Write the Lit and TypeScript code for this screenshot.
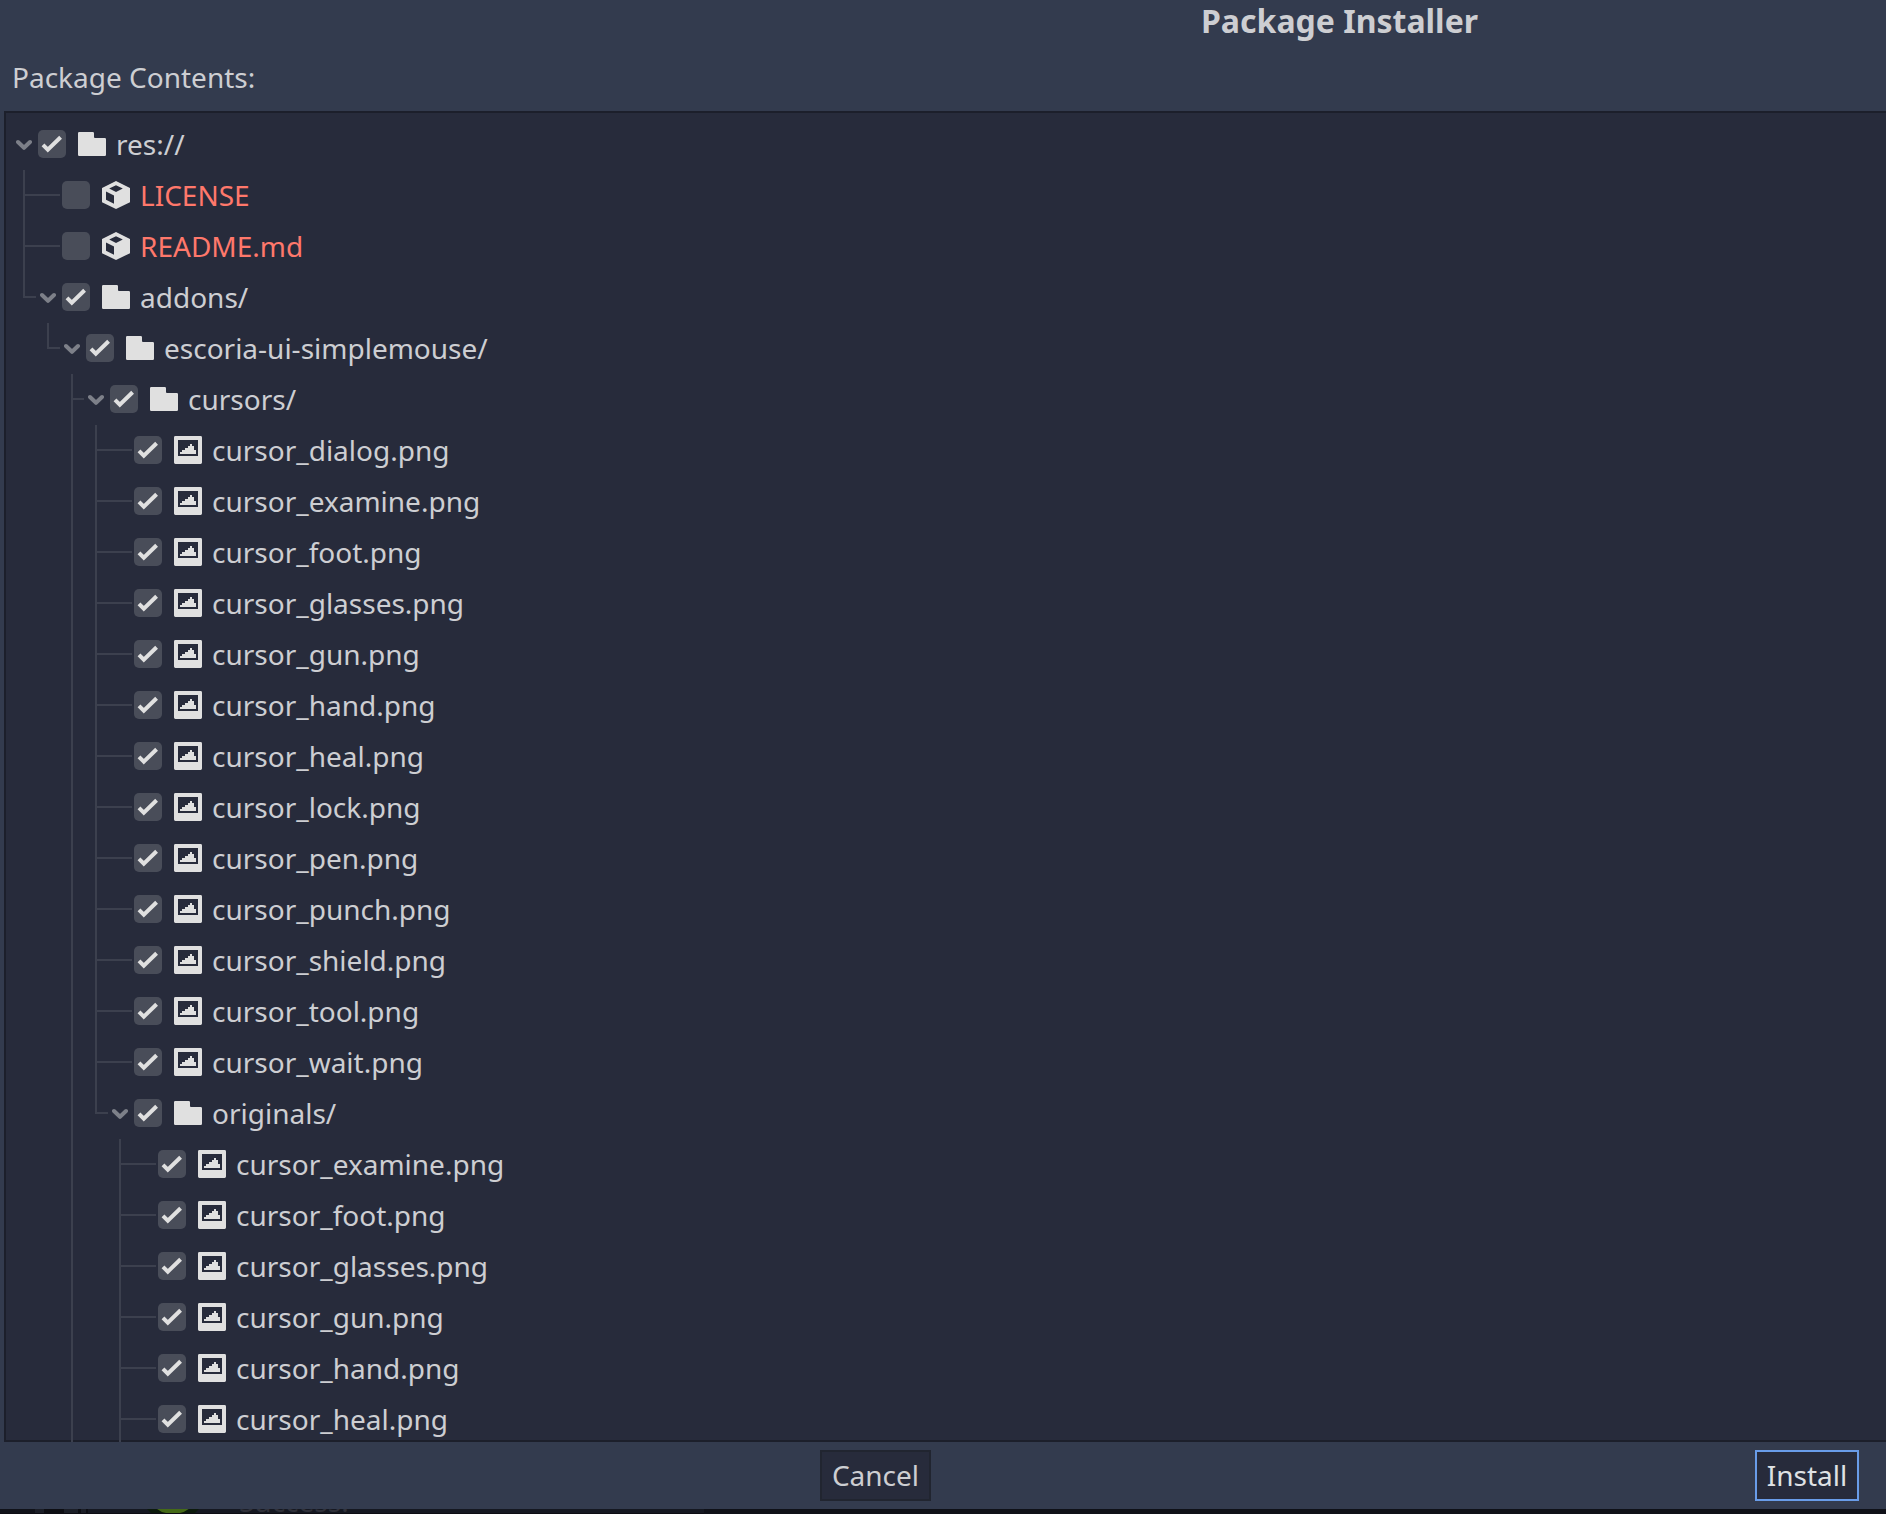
import { LitElement, html, css, svg, nothing } from "lit";
import { customElement, property } from "lit/decorators.js";

type Kind = "folder" | "object" | "image";

interface Entry {
  name: string;
  kind: Kind;
  checked: boolean;
  children?: Entry[];
  /** More siblings follow below the visible part of the list. */
  continues?: boolean;
}

interface Row {
  entry: Entry;
  /** One flag for each ancestor level: does its guide line run through this row? */
  guides: boolean[];
  last: boolean;
}

const image = (name: string): Entry => ({ name: `cursor_${name}.png`, kind: "image", checked: true });

const TREE: Entry = {
  name: "res://", kind: "folder", checked: true,
  children: [
    { name: "LICENSE", kind: "object", checked: false },
    { name: "README.md", kind: "object", checked: false },
    {
      name: "addons/", kind: "folder", checked: true,
      children: [{
        name: "escoria-ui-simplemouse/", kind: "folder", checked: true,
        children: [{
          name: "cursors/", kind: "folder", checked: true, continues: true,
          children: [
            ...["dialog", "examine", "foot", "glasses", "gun", "hand", "heal", "lock", "pen", "punch", "shield", "tool", "wait"].map(image),
            {
              name: "originals/", kind: "folder", checked: true,
              children: [
                ...["examine", "foot", "glasses", "gun", "hand"].map(image),
                { ...image("heal"), continues: true },
              ],
            },
          ],
        }],
      }],
    },
  ],
};

function flatten(entry: Entry, guides: boolean[] = [], last = true): Row[] {
  const rows: Row[] = [{ entry, guides, last }];
  const kids = entry.children ?? [];
  kids.forEach((kid, i) => {
    const kidLast = i === kids.length - 1 && !kid.continues;
    rows.push(...flatten(kid, [...guides, !kidLast], kidLast));
  });
  return rows;
}

const ICONS = {
  folder: svg`<path d="M0 3.2A1.2 1.2 0 0 1 1.2 2H14.8A1.2 1.2 0 0 1 16 3.2V7A1 1 0 0 0 17 8H26.8A1.2 1.2 0 0 1 28 9.2V24.8A1.2 1.2 0 0 1 26.8 26H1.2A1.2 1.2 0 0 1 0 24.8Z"/>`,
  object: svg`<path fill-rule="evenodd" d="M14 0L28 7V21.2L14 28L0 21.2V7ZM14 4.2L7.2 7.6L14 11L20.8 7.6ZM4 10.6V18.8L12 22.8V14.6Z"/>`,
  image: svg`<path fill-rule="evenodd" d="M1.4 0H26.6A1.4 1.4 0 0 1 28 1.4V26.6A1.4 1.4 0 0 1 26.6 28H1.4A1.4 1.4 0 0 1 0 26.6V1.4A1.4 1.4 0 0 1 1.4 0ZM4 4V20H24V4Z"/><path d="M6 18V16H8V14H11V12H14V10H16V8H18V10H20V14H22V18Z"/>`,
};

@customElement("tree-row")
export class TreeRow extends LitElement {
  @property({ attribute: false }) row!: Row;

  static styles = css`
    :host { display: flex; height: 51px; flex: none; }
    .guide { width: 24px; flex: none; display: flex; flex-direction: column; }
    .guide i { display: block; width: 2px; background: #3c404e; }
    .through i { height: 51px; }
    .guide .elbow { height: 26px; }
    .guide .rest { height: 25px; }
    .branch { height: 26px; width: 0; display: flex; align-items: flex-end; }
    .branch b { display: block; flex: none; height: 2px; margin-left: -22px; background: #3c404e; }
    .short { width: 11px; }
    .long { width: 35px; }
    .arrow { width: 16px; height: 12px; margin: 20px 6px 0 -7px; flex: none; }
    .spacer { width: 15px; flex: none; }
    .check { width: 28px; height: 28px; margin-top: 11px; flex: none; border-radius: 5px; background: #494d59; }
    .icon { width: 28px; height: 28px; margin: 11px 10px 0 12px; flex: none; fill: #e0e0e0; }
    .name { font: 28px/38px "Noto Sans", sans-serif; color: #cdced2; margin-top: 6px; white-space: nowrap; }
    .conflict { color: #ff786b; }
    svg { display: block; }
  `;

  render() {
    const { entry, guides, last } = this.row;
    const own = guides.length - 1;
    return html`
      ${guides.map((on, i) => i < own
        ? html`<div class="guide through">${on ? html`<i></i>` : nothing}</div>`
        : html`<div class="guide"><i class="elbow"></i>${last ? nothing : html`<i class="rest"></i>`}</div>`)}
      ${guides.length
        ? html`<div class="branch"><b class=${entry.children ? "short" : "long"}></b></div>`
        : nothing}
      ${entry.children
        ? html`<svg class="arrow" viewBox="0 0 16 12"><path d="M2 3L8 8.8L14 3" fill="none" stroke="#7d8089" stroke-width="4" stroke-linecap="round" stroke-linejoin="round"/></svg>`
        : html`<div class="spacer"></div>`}
      <svg class="check" viewBox="0 0 28 28">
        ${entry.checked
          ? svg`<path d="M5 14.8L9.8 19.6L22.6 7.2" fill="none" stroke="#e0e0e0" stroke-width="4"/>`
          : nothing}
      </svg>
      <svg class="icon" viewBox="0 0 28 28">${ICONS[entry.kind]}</svg>
      <span class="name ${entry.checked ? "" : "conflict"}">${entry.name}</span>
    `;
  }
}

@customElement("app-root")
export class AppRoot extends LitElement {
  static styles = css`
    :host { display: block; width: 1886px; height: 1514px; overflow: hidden; background: #0f1118; font: 28px/38px "Noto Sans", sans-serif; color: #cdced2; }
    .dialog { display: flex; flex-direction: column; height: 1509px; background: #333b4e; }
    .title { flex: none; height: 40px; margin: 0; padding: 1px 0 0 1201px; font: 700 32px/40px "Noto Sans", sans-serif; white-space: nowrap; }
    .label { flex: none; height: 53px; padding: 17px 0 0 12px; }
    .tree { flex: none; box-sizing: border-box; height: 1331px; margin-left: 4px; box-shadow: inset 2px 0 #1c1f2b, inset 0 2px #1c1f2b, inset 0 -2px #1c1f2b; background: #272b3b; padding: 8px 0 0 19px; overflow: hidden; display: flex; flex-direction: column; }
    .actions { display: flex; padding-top: 8px; }
    button { box-sizing: border-box; height: 51px; padding: 0 0 1px; border: 2px solid #212530; background: #272b3b; color: #cdced2; font: 28px/38px "Noto Sans", sans-serif; }
    .cancel { width: 111px; margin-left: 820px; }
    .install { width: 104px; margin-left: 824px; border-color: #699ce8; color: #dfe1e4; }
    .behind { box-sizing: border-box; display: flex; align-items: flex-end; width: 704px; height: 5px; overflow: hidden; background: #151821; border-bottom: 1px solid #0d0d13; }
    .bars { flex: none; width: 88px; height: 5px; background: linear-gradient(90deg, #101219 0 35px, #1b1e27 35px 44px, #0d0e13 44px 64px, #1b1e27 64px 78px, #0d0e13 78px 81px, #1b1e27 81px 86px, #0d0e13 86px); }
    .status { flex: none; display: block; width: 54px; height: 5px; margin-left: 58px; }
    .message { margin: 0 0 -7px 39px; color: #30313a; white-space: nowrap; }
  `;

  render() {
    return html`
      <div class="dialog">
        <h1 class="title">Package Installer</h1>
        <div class="label">Package Contents:</div>
        <div class="tree">${flatten(TREE).map((row) => html`<tree-row .row=${row}></tree-row>`)}</div>
        <div class="actions">
          <button class="cancel">Cancel</button>
          <button class="install">Install</button>
        </div>
      </div>
      <div class="behind">
        <div class="bars"></div>
        <svg class="status" viewBox="0 0 54 5">
          <path d="M0 0H54L49 5H5Z" fill="#0c1a0c"/>
          <path d="M10 0H44Q39 4 34 5H20Q14 4 10 0Z" fill="#456a17"/>
        </svg>
        <span class="message">Success!</span>
      </div>
    `;
  }
}
